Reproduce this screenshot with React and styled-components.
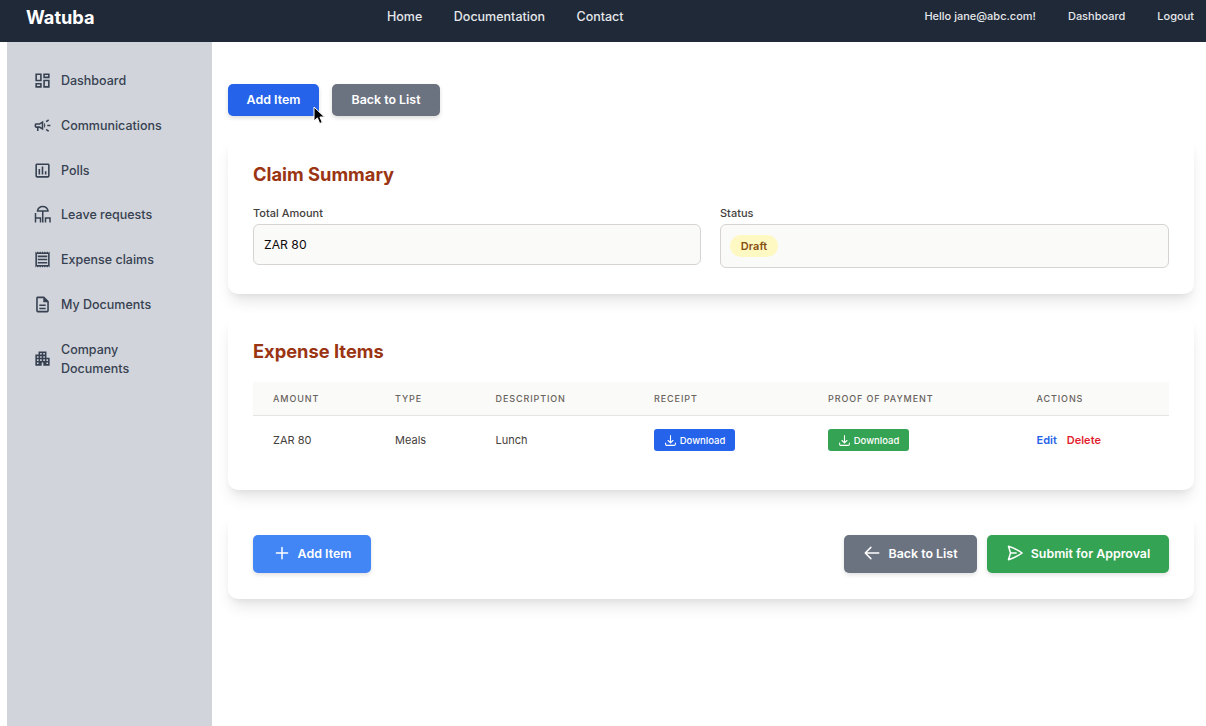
import React from 'react';
import styled, { createGlobalStyle } from 'styled-components';
import {
  MdOutlineDashboard,
  MdOutlineCampaign,
  MdOutlinePoll,
  MdOutlineReceipt,
  MdOutlineDescription,
  MdOutlineApartment,
} from 'react-icons/md';
import {
  HiOutlineArrowDownTray,
  HiOutlineArrowLeft,
  HiOutlinePaperAirplane,
  HiOutlinePlus,
} from 'react-icons/hi2';

const GlobalStyle = createGlobalStyle`
  html, body {
    margin: 0;
    padding: 0;
    background: #ffffff;
    font-family: Inter, "Liberation Sans", sans-serif;
    -webkit-font-smoothing: antialiased;
  }
  * { box-sizing: border-box; }
`;

const Page = styled.div`
  width: 1206px;
  height: 726px;
  overflow: hidden;
  display: flex;
  flex-direction: column;
`;

const TopBar = styled.header`
  height: 42px;
  flex-shrink: 0;
  background: #1f2937;
  color: #e5e7eb;
  display: grid;
  grid-template-columns: 361px 1fr auto;
  align-items: start;
  padding: 0 12px 0 26px;
`;

const Logo = styled.div`
  font-size: 18.2px;
  line-height: 34px;
  font-weight: 700;
  color: #ffffff;
`;

const CenterNav = styled.nav`
  display: flex;
  gap: 31.5px;
  font-size: 12.5px;
  font-weight: 500;
  line-height: 33px;
`;

const UserNav = styled.nav`
  display: flex;
  gap: 32px;
  font-size: 11px;
  font-weight: 500;
  line-height: 33px;
`;

const Body = styled.div`
  flex: 1;
  display: flex;
  padding-left: 7px;
`;

const Sidebar = styled.aside`
  width: 205px;
  flex-shrink: 0;
  background: #d1d5db;
  padding-top: 16.2px;
`;

const SideItem = styled.div`
  display: flex;
  align-items: center;
  gap: 9px;
  min-height: ${props => (props.$tall ? '64px' : '44.8px')};
  padding-left: 26px;
  font-size: 12.5px;
  line-height: 19px;
  font-weight: 500;
  color: #374151;

  svg {
    width: 19px;
    height: 19px;
    flex-shrink: 0;
  }
`;

const SideLabel = styled.span`
  width: 110px;
`;

const Main = styled.main`
  flex: 1;
  padding: 42px 12px 0 16px;
  display: flex;
  flex-direction: column;
`;

const TopActions = styled.div`
  position: relative;
  display: flex;
  gap: 13px;
  margin-bottom: 22px;
`;

const SmallButton = styled.div`
  width: ${props => (props.$gray ? '108px' : '91px')};
  height: 32px;
  padding-bottom: 2px;
  display: flex;
  align-items: center;
  justify-content: center;
  border-radius: 5px;
  background: ${props => (props.$gray ? '#6b7280' : '#2563eb')};
  color: #ffffff;
  font-size: 12.4px;
  font-weight: 600;
  box-shadow: 0 2px 4px rgba(0, 0, 0, 0.14);
`;

const Cursor = styled.svg`
  position: absolute;
  left: 85px;
  top: 22px;
  width: 13px;
  height: 19px;
`;

const Card = styled.section`
  background: #ffffff;
  border-radius: 10px;
  padding: ${props => props.$padding};
  margin-bottom: 23px;
  box-shadow: 0 10px 15px -3px rgba(0, 0, 0, 0.1), 0 4px 6px -2px rgba(0, 0, 0, 0.05);
`;

const CardTitle = styled.h2`
  margin: 0;
  font-size: 18.3px;
  line-height: 24px;
  font-weight: 700;
  color: #9a3412;
`;

const FieldGrid = styled.div`
  display: grid;
  grid-template-columns: 448px 449px;
  gap: 19px;
  margin-top: 19px;
  align-items: start;
`;

const FieldLabel = styled.div`
  font-size: 11px;
  line-height: 16px;
  font-weight: 500;
  color: #44403c;
  margin-bottom: 3px;
`;

const FieldBox = styled.div`
  height: ${props => (props.$tall ? '44px' : '41px')};
  display: flex;
  align-items: center;
  padding: 0 10px;
  background: #fafaf9;
  border: 1px solid #d6d3d1;
  border-radius: 6px;
  font-size: 12.2px;
  color: #0c0a09;
`;

const Badge = styled.span`
  width: 48px;
  margin-left: -1px;
  text-align: center;
  line-height: 22px;
  border-radius: 11px;
  background: #fef9c3;
  color: #854d0e;
  font-size: 11px;
  font-weight: 600;
`;

const TableGrid = styled.div`
  display: grid;
  grid-template-columns: 122px 100.5px 158.5px 174px 208.5px 1fr;
  align-items: center;
  padding-left: 20px;
`;

const TableHead = styled(TableGrid)`
  height: 34px;
  margin-top: 19px;
  background: #fafaf9;
  border-bottom: 1px solid #e7e5e4;
  font-size: 9px;
  font-weight: 500;
  letter-spacing: 0.9px;
  color: #68625c;
`;

const TableRow = styled(TableGrid)`
  height: 48px;
  font-size: 11px;
  color: #44403c;
`;

const DownloadButton = styled.div`
  width: 81px;
  height: 22px;
  display: flex;
  align-items: center;
  justify-content: center;
  gap: 3px;
  border-radius: 3px;
  background: ${props => (props.$green ? '#34a353' : '#2563eb')};
  color: #ffffff;
  font-size: 9.5px;
  font-weight: 500;

  svg {
    width: 13px;
    height: 13px;
    stroke-width: 2;
  }
`;

const RowActions = styled.div`
  display: flex;
  gap: 10px;
  font-weight: 600;
`;

const ActionLink = styled.span`
  color: ${props => (props.$danger ? '#e11d2e' : '#2563eb')};
`;

const FooterRow = styled.div`
  display: flex;
  justify-content: space-between;
`;

const FooterGroup = styled.div`
  display: flex;
  gap: 10px;
`;

const LargeButton = styled.div`
  width: ${props => props.$width};
  height: 38px;
  padding-bottom: 2px;
  display: flex;
  align-items: center;
  justify-content: center;
  gap: 7px;
  border-radius: 5px;
  background: ${props => props.$bg};
  color: #ffffff;
  font-size: 12.4px;
  font-weight: 600;
  box-shadow: 0 2px 4px rgba(0, 0, 0, 0.12);

  svg {
    width: 18px;
    height: 18px;
    stroke-width: 2;
  }
`;

// umbrella over a table with two chairs, not in the icon packages in this shape
const LeaveIcon = () => (
  <svg viewBox="0 0 19 19" fill="none" stroke="currentColor" strokeWidth="1.5">
    <path d="M4.500 6a5.250 4.500 0 0 1 10.500 0z" />
    <path d="M9.750 6v11.500" />
    <path d="M2.500 8v9.500M2.500 13h5v4.500" />
    <path d="M12.500 17.500V13h4.500v4.500" />
  </svg>
);

const sideItems = [
  { label: 'Dashboard', icon: MdOutlineDashboard },
  { label: 'Communications', icon: MdOutlineCampaign },
  { label: 'Polls', icon: MdOutlinePoll },
  { label: 'Leave requests', icon: LeaveIcon },
  { label: 'Expense claims', icon: MdOutlineReceipt },
  { label: 'My Documents', icon: MdOutlineDescription },
  { label: 'Company Documents', icon: MdOutlineApartment, tall: true },
];

const App = () => (
  <Page>
    <GlobalStyle />
    <TopBar>
      <Logo>Watuba</Logo>
      <CenterNav>
        <span>Home</span>
        <span>Documentation</span>
        <span>Contact</span>
      </CenterNav>
      <UserNav>
        <span>Hello jane@abc.com!</span>
        <span>Dashboard</span>
        <span>Logout</span>
      </UserNav>
    </TopBar>
    <Body>
      <Sidebar>
        {sideItems.map(({ label, icon: Icon, tall }) => (
          <SideItem key={label} $tall={tall}>
            <Icon />
            <SideLabel>{label}</SideLabel>
          </SideItem>
        ))}
      </Sidebar>
      <Main>
        <TopActions>
          <SmallButton>Add Item</SmallButton>
          <SmallButton $gray>Back to List</SmallButton>
          <Cursor viewBox="0 0 13 19">
            <path d="M1 1v14l3.400-3.100 2.300 5.600 2.600-1.100-2.400-5.400H11.500z" fill="#000" stroke="#fff" strokeWidth="1" />
          </Cursor>
        </TopActions>

        <Card $padding="24px 25px 26px">
          <CardTitle>Claim Summary</CardTitle>
          <FieldGrid>
            <div>
              <FieldLabel>Total Amount</FieldLabel>
              <FieldBox>ZAR 80</FieldBox>
            </div>
            <div>
              <FieldLabel>Status</FieldLabel>
              <FieldBox $tall>
                <Badge>Draft</Badge>
              </FieldBox>
            </div>
          </FieldGrid>
        </Card>

        <Card $padding="22px 25px 26px">
          <CardTitle>Expense Items</CardTitle>
          <TableHead>
            <span>AMOUNT</span>
            <span>TYPE</span>
            <span>DESCRIPTION</span>
            <span>RECEIPT</span>
            <span>PROOF OF PAYMENT</span>
            <span>ACTIONS</span>
          </TableHead>
          <TableRow>
            <span>ZAR 80</span>
            <span>Meals</span>
            <span>Lunch</span>
            <DownloadButton>
              <HiOutlineArrowDownTray />
              Download
            </DownloadButton>
            <DownloadButton $green>
              <HiOutlineArrowDownTray />
              Download
            </DownloadButton>
            <RowActions>
              <ActionLink>Edit</ActionLink>
              <ActionLink $danger>Delete</ActionLink>
            </RowActions>
          </TableRow>
        </Card>

        <Card $padding="22px 25px 26px">
          <FooterRow>
            <LargeButton $bg="#4285f4" $width="118px">
              <HiOutlinePlus />
              Add Item
            </LargeButton>
            <FooterGroup>
              <LargeButton $bg="#6b7280" $width="133px">
                <HiOutlineArrowLeft />
                Back to List
              </LargeButton>
              <LargeButton $bg="#34a353" $width="182px">
                <HiOutlinePaperAirplane />
                Submit for Approval
              </LargeButton>
            </FooterGroup>
          </FooterRow>
        </Card>
      </Main>
    </Body>
  </Page>
);

export default App;
